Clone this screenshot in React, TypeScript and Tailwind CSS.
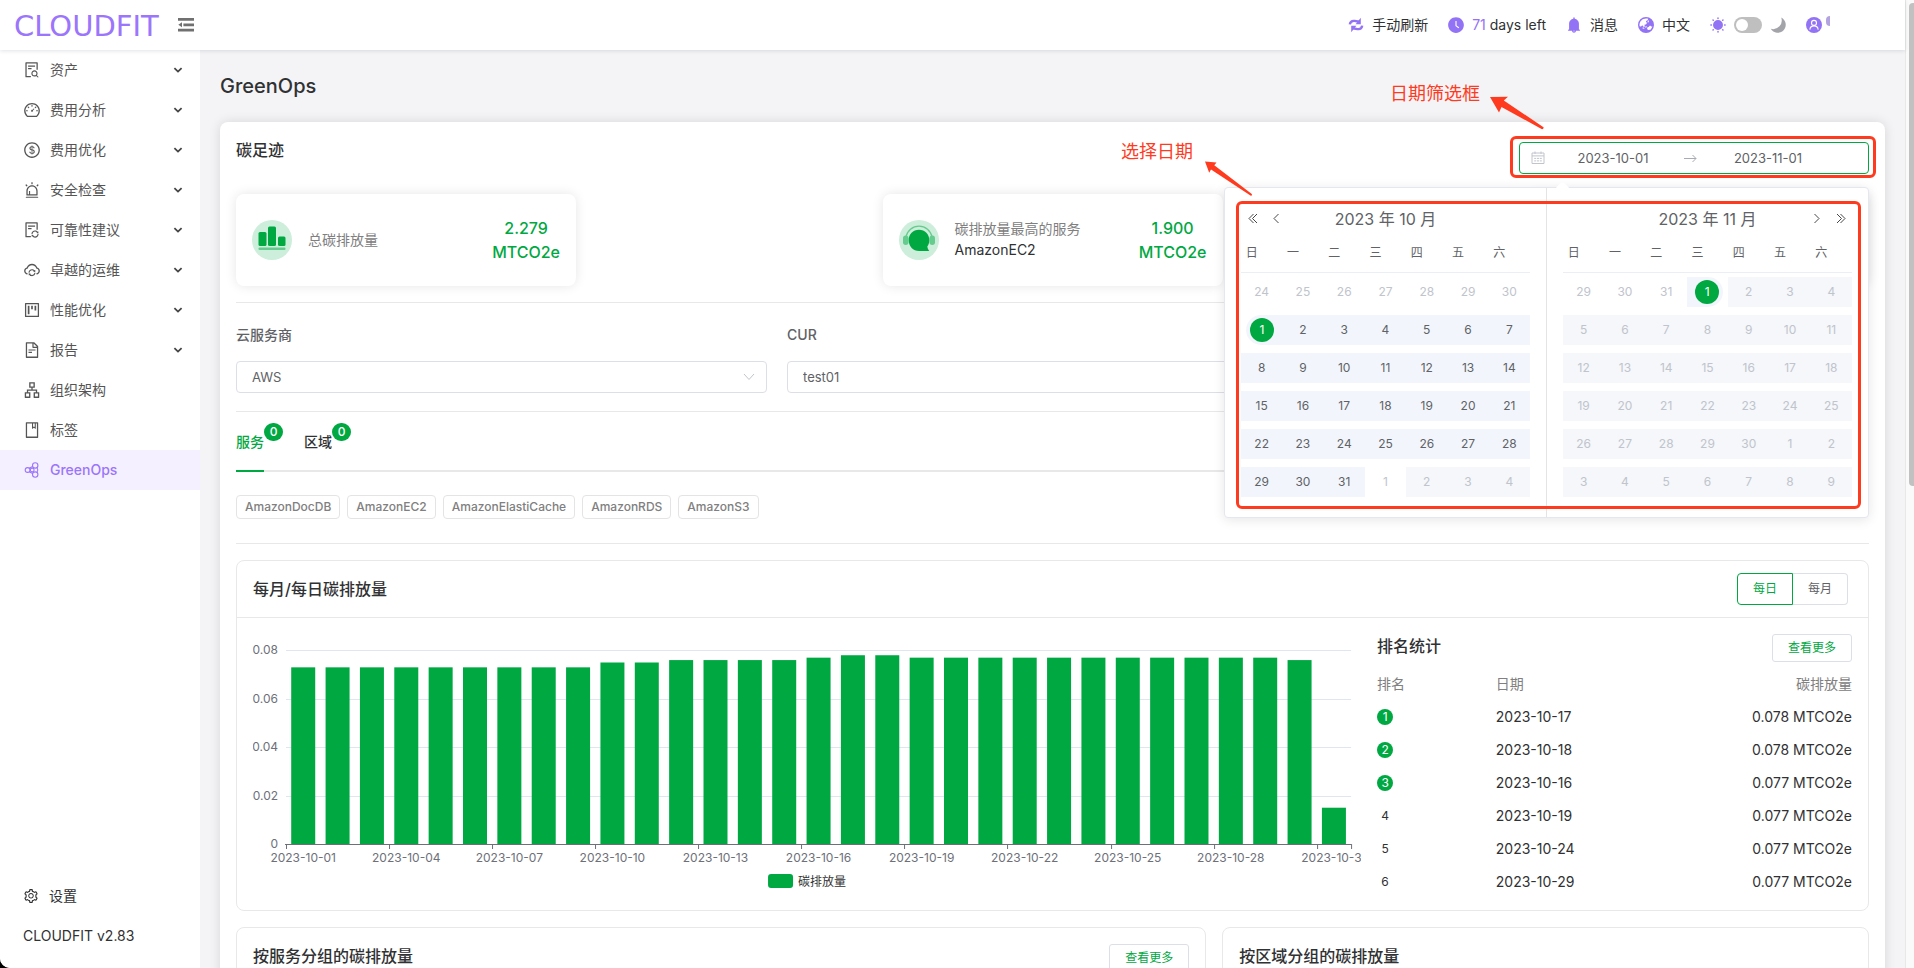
import { clsx } from "clsx";
import type { ReactNode } from "react";
import {
  AiFillBell,
  AiFillClockCircle,
  AiOutlineAlert,
  AiOutlineApartment,
  AiOutlineBook,
  AiOutlineCloudSync,
  AiOutlineDashboard,
  AiOutlineDollarCircle,
  AiOutlineFileSearch,
  AiOutlineFileSync,
  AiOutlineFileText,
  AiOutlineProject,
  AiOutlineSetting,
} from "react-icons/ai";
import { FaEarthAsia } from "react-icons/fa6";

type MenuItem = {
  label: string;
  icon: ReactNode;
  expandable?: boolean;
  active?: boolean;
};

type DayKind = "plain" | "range" | "muted" | "disabled" | "start" | "end";

const MENU: MenuItem[] = [
  { label: "资产", icon: <AiOutlineFileSearch />, expandable: true },
  { label: "费用分析", icon: <AiOutlineDashboard />, expandable: true },
  { label: "费用优化", icon: <AiOutlineDollarCircle />, expandable: true },
  { label: "安全检查", icon: <AiOutlineAlert />, expandable: true },
  { label: "可靠性建议", icon: <AiOutlineFileSync />, expandable: true },
  { label: "卓越的运维", icon: <AiOutlineCloudSync />, expandable: true },
  { label: "性能优化", icon: <AiOutlineProject />, expandable: true },
  { label: "报告", icon: <AiOutlineFileText />, expandable: true },
  { label: "组织架构", icon: <AiOutlineApartment /> },
  { label: "标签", icon: <AiOutlineBook /> },
  { label: "GreenOps", icon: <ClusterIcon />, active: true },
];

const WEEKDAYS = ["日", "一", "二", "三", "四", "五", "六"];

const TAGS = ["AmazonDocDB", "AmazonEC2", "AmazonElastiCache", "AmazonRDS", "AmazonS3"];

const EMISSIONS = [
  0.073, 0.073, 0.073, 0.073, 0.073, 0.073, 0.073, 0.073, 0.073, 0.075, 0.075, 0.076, 0.076, 0.076, 0.076, 0.077,
  0.078, 0.078, 0.077, 0.077, 0.077, 0.077, 0.077, 0.077, 0.077, 0.077, 0.077, 0.077, 0.077, 0.076, 0.015,
];

const RANKING = [
  { date: "2023-10-17", value: "0.078" },
  { date: "2023-10-18", value: "0.078" },
  { date: "2023-10-16", value: "0.077" },
  { date: "2023-10-19", value: "0.077" },
  { date: "2023-10-24", value: "0.077" },
  { date: "2023-10-29", value: "0.077" },
];

// 42 cells, starting from the Sunday before the first of the month
function monthCells(prevStart: number, prevEnd: number, length: number) {
  const cells: { day: number; offset: number }[] = [];
  for (let d = prevStart; d <= prevEnd; d++) cells.push({ day: d, offset: -1 });
  for (let d = 1; d <= length; d++) cells.push({ day: d, offset: 0 });
  for (let d = 1; cells.length < 42; d++) cells.push({ day: d, offset: 1 });
  return cells;
}

function octoberKind(day: number, offset: number): DayKind {
  if (offset === 0) return day === 1 ? "start" : "range";
  return offset === 1 && day > 1 ? "disabled" : "muted";
}

function novemberKind(day: number, offset: number): DayKind {
  if (offset === -1) return "muted";
  return offset === 0 && day === 1 ? "end" : "disabled";
}

function ClusterIcon() {
  return (
    <svg width="18" height="18" viewBox="-1 -1 18 18" fill="none" stroke="currentColor" strokeWidth="1.1">
      <circle cx="3.6" cy="8" r="2.4" />
      <circle cx="11.2" cy="3.4" r="2.7" />
      <circle cx="11.2" cy="12.6" r="2.7" />
      <circle cx="8.2" cy="8" r="1.9" />
      <path d="M5.2 6.2 8.6 4.4M5.2 9.8l3.4 1.800M13 5.500c.9 1.400.9 3.600 0 5" />
    </svg>
  );
}

function Chevron({ className }: { className?: string }) {
  return (
    <svg className={className} width="10" height="10" viewBox="0 0 10 10" fill="none" stroke="currentColor" strokeWidth="1.8">
      <path d="M1.4 3.2 5 6.6l3.6-3.4" />
    </svg>
  );
}

function FoldIcon() {
  return (
    <svg width="16" height="14" viewBox="0 0 16 14" fill="currentColor">
      <path d="M0 0h16v2.8H0zM5.4 5.400H16v2.800H5.400zM0 10.800h16v2.800H0zM.3 6.800 4 4.300v5z" />
    </svg>
  );
}

function RefreshIcon() {
  return (
    <svg width="16" height="16" viewBox="0 0 16 16" fill="none" stroke="#9373f5" strokeWidth="2.4">
      <path d="M1.800 7.400C2.200 5 4 3.600 6.500 3.900l5 .9" />
      <path d="M14.200 8.600c-.4 2.400-2.200 3.800-4.700 3.500l-5-.9" />
      <path d="M12.800.8v6.400H7.600zM3.200 15.200V8.800h5.200z" fill="#9373f5" stroke="none" />
    </svg>
  );
}

function SunIcon() {
  return (
    <svg width="16" height="16" viewBox="0 0 16 16" fill="#9373f5" stroke="#9373f5" strokeWidth="1.5" strokeLinecap="round">
      <circle cx="8" cy="8" r="4.2" />
      <path d="M8 .9v.5M8 14.6v.5M.9 8h.5M14.6 8h.5M3 3l.3.3M12.7 12.7l.3.3M13 3l-.3.3M3.3 12.7 3 13" />
    </svg>
  );
}

function MoonIcon() {
  return (
    <svg width="16" height="16" viewBox="0 0 16 16" fill="#a3a3aa">
      <path d="M11.2.6A8 8 0 1 1 .8 11.8 8.6 8.6 0 0 0 11.2.6z" />
    </svg>
  );
}

function UserIcon() {
  return (
    <svg width="16" height="16" viewBox="0 0 16 16" fill="none">
      <circle cx="8" cy="8" r="8" fill="#9373f5" />
      <circle cx="8" cy="5.9" r="2.5" stroke="#fff" strokeWidth="1.1" />
      <path d="M3.8 12.6C4.2 10 6 8.9 8 8.9s3.8 1.1 4.2 3.7" stroke="#fff" strokeWidth="1.1" />
    </svg>
  );
}

function CalendarIcon() {
  return (
    <svg className="shrink-0" width="14" height="14" viewBox="0 0 14 14" fill="none" stroke="#c0c4cc">
      <path d="M1 2h12v10.5H1zM1 4.9h12M4 .5v2.5M10 .5v2.5" />
      <path d="M3.2 7.4h2M6 7.4h2M8.8 7.4h2M3.2 9.9h2M6 9.9h2M8.8 9.9h2" />
    </svg>
  );
}

function Header() {
  return (
    <header className="relative z-20 flex h-[50px] shrink-0 items-center justify-between bg-white pr-[75px] pl-[14px] text-sm text-[#303133] shadow-[0_1px_4px_rgba(0,21,41,0.12)]">
      <div className="flex items-center gap-[19px]">
        <a className="pt-[2px] font-['DejaVu_Sans',sans-serif] text-[29px] leading-[48px] text-[#9b75fb]" href="#home">CLOUDFIT</a>
        <button aria-label="收起菜单" className="text-[#707070]" type="button"><FoldIcon /></button>
      </div>
      <div className="flex items-center gap-5">
        <button className="flex items-center gap-2" type="button"><RefreshIcon />手动刷新</button>
        <div className="flex items-center gap-2">
          <AiFillClockCircle className="-m-px" color="#9373f5" size={18} />
          <span><span className="text-[#9373f5]">71</span> days left</span>
        </div>
        <button className="flex items-center gap-2" type="button"><AiFillBell className="-m-px" color="#9373f5" size={18} />消息</button>
        <button className="flex items-center gap-2" type="button"><FaEarthAsia color="#9373f5" size={16} />中文</button>
        <div className="flex items-center gap-2">
          <SunIcon />
          <button aria-checked="false" aria-label="深色模式" className="flex h-4 w-7 items-center rounded-full bg-[#bfbfbf] px-[2px]" role="switch" type="button">
            <span className="size-3 rounded-full bg-white" />
          </button>
          <MoonIcon />
        </div>
        <button aria-label="账户" className="flex items-center gap-1" type="button">
          <UserIcon />
          <span className="mb-2 h-[10px] w-1 rounded-l-full bg-[#b3a3e0]" />
        </button>
      </div>
    </header>
  );
}

function Sidebar() {
  return (
    <aside className="flex w-[200px] shrink-0 flex-col justify-between bg-white pb-3 text-sm text-[#555]">
      <nav>
        {MENU.map((item) => (
          <a
            className={clsx("flex h-10 items-center pr-[17px] pb-px pl-[23px]", item.active && "bg-[#f5f0ff] font-medium text-[#9b75fb]")}
            href="#menu"
            key={item.label}
          >
            <span className="mr-[9px] text-lg">{item.icon}</span>
            <span className="flex-1">{item.label}</span>
            {item.expandable ? <Chevron className="text-[#444]" /> : null}
          </a>
        ))}
      </nav>
      <div className="pl-[23px] text-[#303133]">
        <a className="flex h-10 items-center gap-[10px]" href="#settings"><AiOutlineSetting size={16} />设置</a>
        <div className="flex h-10 items-center">CLOUDFIT v2.83</div>
      </div>
    </aside>
  );
}

function DayCell({ day, kind }: { day: number; kind: DayKind }) {
  return (
    <td className="p-0">
      <button
        className={clsx(
          "my-1 flex h-[30px] w-full items-center justify-center",
          kind === "range" && "bg-[#f2f6fc]",
          kind === "muted" && "text-[#c0c4cc]",
          kind === "disabled" && "bg-[#f5f7fa] text-[#c0c4cc]",
          kind === "start" && "pl-[5px]",
          kind === "end" && "pr-[5px]",
        )}
        disabled={kind === "disabled"}
        type="button"
      >
        {kind === "start" || kind === "end" ? (
          <span
            className={clsx(
              "flex h-full w-full items-center bg-[#f2f6fc]",
              kind === "start" ? "justify-start rounded-l-full pl-1" : "justify-end rounded-r-full pr-1",
            )}
          >
            <span className="flex size-6 items-center justify-center rounded-full bg-[#00a842] text-white">{day}</span>
          </span>
        ) : (
          day
        )}
      </button>
    </td>
  );
}

type MonthProps = {
  title: string;
  cells: { day: number; offset: number }[];
  kindOf: (day: number, offset: number) => DayKind;
  side: "left" | "right";
};

function Month({ title, cells, kindOf, side }: MonthProps) {
  const rows = [0, 1, 2, 3, 4, 5].map((r) => cells.slice(r * 7, r * 7 + 7));
  return (
    <div className={clsx("flex-1 p-4", side === "left" && "border-r border-[#e4e4e4]")}>
      <div className="relative flex h-[30px] items-center justify-center text-base text-[#606266]">
        {title}
        <div className={clsx("absolute inset-y-0 flex items-center gap-3 pb-px text-[#303133]", side === "left" ? "left-[7px]" : "right-[5px]")}>
          {side === "left" ? (
            <>
              <button aria-label="上一年" type="button"><Arrows d="M5.5 1 1 5.5 5.5 10M9 1 4.5 5.5 9 10" /></button>
              <button aria-label="上个月" type="button"><Arrows d="M6.5 1 2 5.5 6.5 10" /></button>
            </>
          ) : (
            <>
              <button aria-label="下个月" type="button"><Arrows d="M3.5 1 8 5.5 3.5 10" /></button>
              <button aria-label="下一年" type="button"><Arrows d="M2 1l4.500 4.500L2 10M5.500 1 10 5.500 5.500 10" /></button>
            </>
          )}
        </div>
      </div>
      <table className="w-full table-fixed border-separate border-spacing-0 text-xs text-[#606266]">
        <thead>
          <tr>
            {WEEKDAYS.map((name) => (
              <th className="h-[39px] border-b border-[#ebeef5] p-0 pr-5 pb-px font-normal" key={name}>{name}</th>
            ))}
          </tr>
        </thead>
        <tbody>
          {rows.map((row, i) => (
            <tr key={i}>
              {row.map((cell) => (
                <DayCell day={cell.day} key={`${cell.offset}:${cell.day}`} kind={kindOf(cell.day, cell.offset)} />
              ))}
            </tr>
          ))}
        </tbody>
      </table>
    </div>
  );
}

function Arrows({ d }: { d: string }) {
  return (
    <svg width="12" height="11" viewBox="0 0 12 11" fill="none" stroke="currentColor" strokeWidth="0.9">
      <path d={d} />
    </svg>
  );
}

function DateRange() {
  return (
    <div className="relative z-10 mt-1">
      <div className="flex h-8 w-[350px] items-center rounded border border-[#00a842] bg-white px-[11px] text-[13px] text-[#606266]">
        <CalendarIcon />
        <input aria-label="开始日期" className="w-[136px] pt-[2px] text-center" defaultValue="2023-10-01" />
        <svg className="mx-[3px] shrink-0" width="13" height="9" viewBox="0 0 13 9" fill="none" stroke="#a8abb2">
          <path d="M0 4.5h12M8.5 1 12 4.5 8.5 8" />
        </svg>
        <input aria-label="结束日期" className="w-[136px] pt-[2px] text-center" defaultValue="2023-11-01" />
      </div>
      <div className="pointer-events-none absolute -top-[6px] -right-[7px] -bottom-1 -left-[9px] rounded-md border-3 border-[#ff3b1f]" />

      <div className="absolute top-[45px] right-0 flex w-[645px] rounded border border-[#e4e7ed] bg-white shadow-[0_2px_12px_rgba(0,0,0,0.1)]">
        <div className="absolute -top-[5px] left-[333px] size-[9px] rotate-45 rounded-tl-sm bg-white" />
        <Month cells={monthCells(24, 30, 31)} kindOf={octoberKind} side="left" title="2023 年 10 月" />
        <Month cells={monthCells(29, 31, 30)} kindOf={novemberKind} side="right" title="2023 年 11 月" />
        <div className="pointer-events-none absolute top-[13px] right-[7px] bottom-2 left-[11px] rounded-md border-3 border-[#ff3b1f]" />
      </div>

      <div className="absolute -top-[60px] -left-[129px] text-lg leading-6 whitespace-nowrap text-[#ff3b1f]">日期筛选框</div>
      <svg className="absolute -top-[46px] -left-[29px]" width="55" height="35" viewBox="0 0 55 35" fill="#ff3b1f">
        <path d="M0 1 18 .8l-4.2 3.6L53.5 31.2a1.5 1.5 0 0 1-1.5 2L11.5 11 9 16.5z" />
      </svg>
      <div className="absolute -top-[2px] -left-[398px] text-lg leading-6 whitespace-nowrap text-[#ff3b1f]">选择日期</div>
      <svg className="absolute top-[19px] -left-[314px]" width="48" height="36" viewBox="0 0 48 36" fill="#ff3b1f">
        <path d="M0 .5 11.5 1.5 9.3 4.3 46.8 33a1.2 1.2 0 0 1-1 1.8L6 8.5 4.2 11.8z" />
      </svg>
    </div>
  );
}

function StatCard({ icon, label, detail, value }: { icon: ReactNode; label: string; detail?: string; value: string }) {
  return (
    <div className="flex h-[92px] w-[340px] items-center rounded-lg bg-white px-4 shadow-[0_0_12px_rgba(0,0,0,0.1)]">
      {icon}
      <div className="ml-4 flex-1 pb-[2px] text-sm leading-[21px]">
        <div className="text-[#808080]">{label}</div>
        {detail ? <div className="text-[#303133]">{detail}</div> : null}
      </div>
      <div className="text-center text-base leading-6 font-medium text-[#00a842]">
        <div>{value}</div>
        <div>MTCO2e</div>
      </div>
    </div>
  );
}

function BarsBadge() {
  return (
    <svg width="40" height="40" viewBox="0 0 40 40" fill="#00a842">
      <circle cx="20" cy="20" r="20" fill="#cceeda" />
      <rect x="6.5" y="12" width="8" height="14" rx="1.5" />
      <rect x="16" y="6.5" width="8" height="19.5" rx="1.5" />
      <rect x="26" y="16.5" width="7.5" height="9.5" rx="1.5" />
      <rect x="6.5" y="27.5" width="27" height="2.5" rx="1" fill="#66cb8e" />
    </svg>
  );
}

function HeadsetBadge() {
  return (
    <svg width="40" height="40" viewBox="0 0 40 40">
      <circle cx="20" cy="20" r="20" fill="#cceeda" />
      <path d="M7 17a13.2 13.2 0 0 1 26 0" fill="none" stroke="#66cb8e" strokeWidth="1.3" />
      <rect x="4" y="15.5" width="5.5" height="9.5" rx="2.7" fill="#66cb8e" />
      <rect x="30.5" y="15.5" width="5.5" height="9.5" rx="2.7" fill="#66cb8e" />
      <path d="M20 9.8c6 0 10.3 4.6 10.3 10.2 0 3-.7 4.8-2 6.6.2 1.500.8 2.800 1.900 4.400H20c-5.800 0-10.300-4.700-10.300-10.800C9.700 14.500 14 9.800 20 9.800z" fill="#00a842" />
    </svg>
  );
}

function SelectField({ id, label, value }: { id: string; label: string; value: string }) {
  return (
    <div>
      <label className="block text-sm leading-[22px] font-medium text-[#606266]" htmlFor={id}>{label}</label>
      <div className="relative mt-[15px]">
        <select className="h-8 w-full appearance-none rounded border border-[#dcdfe6] bg-white px-[15px] pt-[2px] text-[13px] text-[#606266]" id={id}>
          <option>{value}</option>
        </select>
        <svg className="pointer-events-none absolute top-3 right-3 text-[#c0c4cc]" width="12" height="8" viewBox="0 0 12 8" fill="none" stroke="currentColor">
          <path d="M1 1l5 5.5L11 1" />
        </svg>
      </div>
    </div>
  );
}

function Tab({ label, active }: { label: string; active?: boolean }) {
  return (
    <button
      className={clsx(
        "relative -mb-[2px] h-[60px] border-b-2 pt-[2px] text-sm font-medium",
        active ? "border-[#00a842] text-[#00a842]" : "border-transparent text-[#303133]",
      )}
      type="button"
    >
      {label}
      <span className="absolute top-[11px] left-full flex h-[18px] w-[19px] items-center justify-center rounded-full bg-[#00a842] text-xs font-medium text-white">0</span>
    </button>
  );
}

function EmissionChart() {
  const left = 33;
  const step = 1065 / 31;
  const bottom = 210;
  const unit = 193.6 / 0.08;
  return (
    <svg className="block w-full" viewBox="0 0 1108 260" fontSize="12">
      {[0.08, 0.06, 0.04, 0.02, 0].map((v) => (
        <g key={v}>
          {v > 0 ? <path d={`M${left} ${Math.round(bottom - v * unit) + 0.5}h1065`} stroke="#e0e6f1" /> : null}
          <text fill="#6e7079" textAnchor="end" x={25} y={bottom - v * unit + 4}>{v}</text>
        </g>
      ))}
      {EMISSIONS.map((v, i) => (
        <rect fill="#00a842" height={v * unit} key={i} width="24" x={left + i * step + 5.2} y={bottom - v * unit} />
      ))}
      <path d={`M${left - 1} 210.5h1066`} stroke="#6e7079" />
      {EMISSIONS.map((_, i) =>
        i % 3 === 0 ? (
          <g key={i}>
            <path d={`M${Math.round(left + i * step) + 0.5} 210v5`} stroke="#6e7079" />
            <text fill="#6e7079" textAnchor="middle" x={left + (i + 0.5) * step} y="228">
              {`2023-10-${String(i + 1).padStart(2, "0")}`}
            </text>
          </g>
        ) : null,
      )}
      <path d="M1098.5 210v5" stroke="#6e7079" />
      <rect fill="#00a842" height="14" rx="3" width="25" x="515" y="240" />
      <text fill="#333" x="545" y="252">碳排放量</text>
    </svg>
  );
}

function MoreButton({ className }: { className?: string }) {
  return (
    <button className={clsx("h-7 rounded-[3px] border border-[#dcdfe6] bg-white px-[15px] text-xs text-[#00a842]", className)} type="button">
      查看更多
    </button>
  );
}

function Ranking() {
  return (
    <div>
      <div className="flex h-7 items-start justify-between">
        <h3 className="text-base leading-6 font-medium text-[#303133]">排名统计</h3>
        <MoreButton />
      </div>
      <table className="mt-[5px] w-full table-fixed text-sm text-[#303133]">
        <thead>
          <tr className="h-[33px] text-left text-[#808080]">
            <th className="w-1/4 p-0 font-normal">排名</th>
            <th className="p-0 font-normal">日期</th>
            <th className="p-0 text-right font-normal">碳排放量</th>
          </tr>
        </thead>
        <tbody>
          {RANKING.map((row, i) => (
            <tr className="h-[33px]" key={row.date}>
              <td className="p-0">
                <span className={clsx("flex size-4 items-center justify-center rounded-full text-xs", i < 3 && "bg-[#00a842] text-white")}>{i + 1}</span>
              </td>
              <td className="p-0">{row.date}</td>
              <td className="p-0 text-right">{row.value} MTCO2e</td>
            </tr>
          ))}
        </tbody>
      </table>
    </div>
  );
}

export default function App() {
  return (
    <div className="h-screen bg-black font-['Inter','Noto_Sans_CJK_SC',sans-serif]">
      <div className="flex h-full overflow-hidden rounded-bl-[10px] bg-white">
        <div className="flex min-w-0 flex-1 flex-col">
          <Header />
          <div className="flex min-h-0 flex-1">
            <Sidebar />
            <main className="min-w-0 flex-1 overflow-hidden bg-[#f4f4f7] px-5 pt-5">
              <h1 className="text-xl leading-8 font-medium text-[#303133]">GreenOps</h1>
              <section className="mt-5 rounded-lg bg-white p-4 shadow-[0_0_12px_rgba(0,0,0,0.12)]">
                <div className="flex items-start justify-between">
                  <h2 className="text-base leading-6 font-medium text-[#303133]">碳足迹</h2>
                  <DateRange />
                </div>

                <div className="mt-5 flex justify-between">
                  <StatCard icon={<BarsBadge />} label="总碳排放量" value="2.279" />
                  <StatCard detail="AmazonEC2" icon={<HeadsetBadge />} label="碳排放量最高的服务" value="1.900" />
                  <div className="h-[92px] w-[340px] rounded-lg bg-white shadow-[0_0_12px_rgba(0,0,0,0.1)]" />
                </div>

                <div className="mt-4 grid grid-cols-3 gap-5 border-y border-[#e8e8e8] pt-[21px] pb-[18px]">
                  <SelectField id="vendor" label="云服务商" value="AWS" />
                  <SelectField id="cur" label="CUR" value="test01" />
                </div>

                <div className="flex h-[60px] gap-10 border-b-2 border-[#e8e8e8]">
                  <Tab active label="服务" />
                  <Tab label="区域" />
                </div>
                <div className="flex gap-[7px] border-b border-[#e8e8e8] pt-[23px] pb-6">
                  {TAGS.map((tag) => (
                    <button className="h-6 rounded border border-[#e4e4e4] px-2 text-xs font-medium text-[#808080]" key={tag} type="button">{tag}</button>
                  ))}
                </div>

                <div className="mt-4 rounded-lg border border-[#e8e8e8]">
                  <div className="flex h-[57px] items-center justify-between border-b border-[#e8e8e8] pr-5 pl-4">
                    <h2 className="text-base font-medium text-[#303133]">每月/每日碳排放量</h2>
                    <div className="flex text-xs text-[#606266]">
                      <button className="h-8 w-14 rounded-l border border-[#00a842] text-[#00a842]" type="button">每日</button>
                      <button className="h-8 w-[55px] rounded-r border border-l-0 border-[#dcdfe6]" type="button">每月</button>
                    </div>
                  </div>
                  <div className="grid grid-cols-[7fr_3fr] gap-4 px-4 pt-4 pb-3">
                    <EmissionChart />
                    <Ranking />
                  </div>
                </div>

                <div className="mt-4 grid grid-cols-[3fr_2fr] gap-4">
                  <div className="h-[400px] rounded-lg border border-[#e8e8e8]">
                    <div className="flex h-[57px] items-center justify-between border-b border-[#e8e8e8] px-4">
                      <h2 className="text-base font-medium text-[#303133]">按服务分组的碳排放量</h2>
                      <MoreButton className="mt-1" />
                    </div>
                  </div>
                  <div className="h-[400px] rounded-lg border border-[#e8e8e8]">
                    <div className="flex h-[57px] items-center border-b border-[#e8e8e8] px-4">
                      <h2 className="text-base font-medium text-[#303133]">按区域分组的碳排放量</h2>
                    </div>
                  </div>
                </div>
              </section>
            </main>
          </div>
        </div>
        <div className="w-[9px] shrink-0 border-l border-[#e8e8e8] bg-[#fafafa] pt-[3px] pl-[3px]">
          <div className="h-1/2 rounded-l bg-[#c1c1c1]" />
        </div>
      </div>
    </div>
  );
}
